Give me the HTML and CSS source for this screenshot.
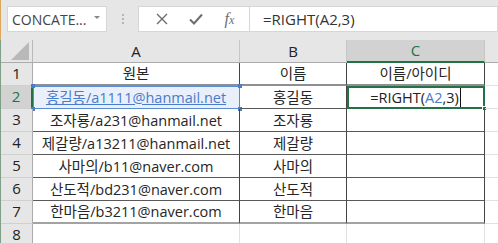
FILE: index.html
```
<!DOCTYPE html>
<html lang="ko">
<head>
  <meta charset="UTF-8">
  <title>RIGHT 함수</title>
  <link rel="stylesheet" href="styles.css">
</head>
<body>

  <!-- Formula bar -->
  <div class="toolbar">
    <div class="name-box">
      <span class="name-text">CONCATE...</span>
      <span class="name-arrow"></span>
    </div>
    <div class="grip"><i></i><i></i><i></i></div>
    <div class="fx-box">
      <svg class="icon" width="12" height="12" viewBox="0 0 12 12">
        <path d="M1 1 L11 11 M11 1 L1 11" stroke="#6d6d6d" stroke-width="1.4" fill="none"/>
      </svg>
      <svg class="icon" width="14" height="12" viewBox="0 0 14 12">
        <path d="M1 6.5 L5 10.5 L13 1.5" stroke="#6d6d6d" stroke-width="2" fill="none"/>
      </svg>
      <span class="fx">f<small>x</small></span>
    </div>
    <div class="formula">=RIGHT(A2,3)</div>
  </div>

  <!-- Sheet -->
  <div class="sheet">
    <div class="cell corner"><span class="tri"></span></div>
    <div class="cell ch">A</div>
    <div class="cell ch">B</div>
    <div class="cell ch active">C</div>
    <div class="cell ch"></div>

    <div class="cell rh">1</div>
    <div class="cell t head">원본</div>
    <div class="cell t head">이름</div>
    <div class="cell t head last">이름/아이디</div>
    <div class="cell g"></div>

    <div class="cell rh active">2</div>
    <div class="cell t ref">
      <span class="link">홍길동/a1111@hanmail.net</span>
      <i class="dot tl"></i><i class="dot tr"></i><i class="dot bl"></i><i class="dot br"></i>
    </div>
    <div class="cell t">홍길동</div>
    <div class="cell t last edit">=RIGHT(<span class="blue">A2</span>,3)<span class="caret"></span><i class="handle"></i></div>
    <div class="cell g"></div>

    <div class="cell rh">3</div>
    <div class="cell t">조자룡/a231@hanmail.net</div>
    <div class="cell t">조자룡</div>
    <div class="cell t last"></div>
    <div class="cell g"></div>

    <div class="cell rh">4</div>
    <div class="cell t">제갈량/a13211@hanmail.net</div>
    <div class="cell t">제갈량</div>
    <div class="cell t last"></div>
    <div class="cell g"></div>

    <div class="cell rh">5</div>
    <div class="cell t">사마의/b11@naver.com</div>
    <div class="cell t">사마의</div>
    <div class="cell t last"></div>
    <div class="cell g"></div>

    <div class="cell rh">6</div>
    <div class="cell t">산도적/bd231@naver.com</div>
    <div class="cell t">산도적</div>
    <div class="cell t last"></div>
    <div class="cell g"></div>

    <div class="cell rh">7</div>
    <div class="cell t foot">한마음/b3211@naver.com</div>
    <div class="cell t foot">한마음</div>
    <div class="cell t foot last"></div>
    <div class="cell g"></div>

    <div class="cell rh">8</div>
    <div class="cell g"></div>
    <div class="cell g"></div>
    <div class="cell g"></div>
    <div class="cell g"></div>
  </div>

</body>
</html>
```

FILE: styles.css
```
* {
  margin: 0;
  padding: 0;
  box-sizing: border-box;
}

body {
  width: 498px;
  height: 243px;
  overflow: hidden;
  background: #fff;
  font-family: "Open Sans", "Noto Sans CJK KR", sans-serif;
  color: #222;
}

/* Formula bar */
.toolbar {
  height: 40px;
  background: #e6e6e6;
  border-left: 1px solid #d9a85a;
  display: flex;
  align-items: flex-start;
  padding-top: 6px;
}

.name-box {
  margin-left: 6px;
  width: 100px;
  height: 26px;
  background: #fff;
  border: 1px solid #d6d6d6;
  display: flex;
  align-items: center;
  padding-left: 4px;
}

.name-text {
  font-size: 14px;
  color: #444;
  flex: 1;
}

.name-arrow {
  width: 0;
  height: 0;
  border-left: 3px solid transparent;
  border-right: 3px solid transparent;
  border-top: 3px solid #888;
  margin-right: 6px;
  margin-top: -4px;
}

.grip {
  width: 31px;
  height: 26px;
  display: flex;
  flex-direction: column;
  align-items: center;
  justify-content: center;
  gap: 2px;
}

.grip i {
  width: 2px;
  height: 2px;
  background: #b5b5b5;
}

.fx-box {
  width: 112px;
  height: 26px;
  background: #fff;
  border: 1px solid #d6d6d6;
  display: flex;
  align-items: center;
  justify-content: space-around;
  padding: 0 4px 0 6px;
}

.fx {
  font-family: "Liberation Serif", serif;
  font-style: italic;
  font-size: 16px;
  color: #6d6d6d;
}

.fx small {
  font-size: 12px;
}

.formula {
  flex: 1;
  height: 26px;
  background: #fff;
  border: 1px solid #d6d6d6;
  border-left: none;
  font-size: 15px;
  color: #333;
  padding-left: 13px;
  line-height: 24px;
}

/* Sheet grid */
.sheet {
  display: grid;
  grid-template-columns: 32px 207px 107px 138px 14px;
  grid-auto-rows: 23px;
  border-left: 1px solid #7f9f89;
}

.cell {
  border-right: 1px solid #dadada;
  border-bottom: 1px solid #dadada;
  display: flex;
  align-items: center;
  justify-content: center;
  font-size: 14px;
  line-height: 15px;
  white-space: nowrap;
  position: relative;
}

.corner {
  background: #e6e6e6;
  border-right: 1px solid #b8b8b8;
  border-bottom: 1px solid #ababab;
  justify-content: flex-end;
  align-items: flex-end;
  padding: 0 3px 2px 0;
}

.tri {
  width: 0;
  height: 0;
  border-left: 18px solid transparent;
  border-bottom: 18px solid #b9b9b9;
}

.ch {
  background: #e6e6e6;
  border-right: 1px solid #c6c6c6;
  border-bottom: 1px solid #ababab;
  color: #222;
  font-size: 15px;
}

.ch.active {
  background: #d2d2d2;
  color: #217346;
  border-bottom: 2px solid #217346;
}

.rh {
  background: #e6e6e6;
  border-right: 1px solid #ababab;
  border-bottom: 1px solid #d0d0d0;
  font-size: 15px;
  padding-bottom: 1px;
}

.rh.active {
  background: #d2d2d2;
  color: #217346;
  border-right: 2px solid #217346;
}

.t {
  border-right: 1px solid #444;
  border-bottom: 1px solid #595959;
  color: #262626;
  font-size: 14.5px;
  line-height: 17px;
}

.t.head {
  border-bottom: 2px solid #8f8f8f;
}

.t.foot {
  border-bottom: 2px solid #a3a3a3;
}

.g {
  border-right: 1px solid #e1e1e1;
  border-bottom: 1px solid #e1e1e1;
}

/* Referenced cell A2 */
.ref {
  background: #e9f0fb;
  outline: 1px solid #5b8bd3;
  outline-offset: -1px;
}

.link {
  color: #4a7ccc;
  text-decoration: underline;
}

.dot {
  position: absolute;
  width: 4px;
  height: 4px;
  background: #4a7ccc;
}

.dot.tl { left: -2px; top: -2px; }
.dot.tr { right: -3px; top: -2px; }
.dot.bl { left: -2px; bottom: -3px; }
.dot.br { right: -3px; bottom: -3px; }

/* Active cell C2 */
.edit {
  outline: 2px solid #217346;
  outline-offset: -2px;
  color: #222;
}

.blue {
  color: #4a7ccc;
}

.caret {
  width: 1px;
  height: 19px;
  background: #111;
  margin-left: 1px;
}

.handle {
  position: absolute;
  right: -3px;
  bottom: -3px;
  width: 5px;
  height: 5px;
  background: #217346;
  border: 1px solid #fff;
}
```
